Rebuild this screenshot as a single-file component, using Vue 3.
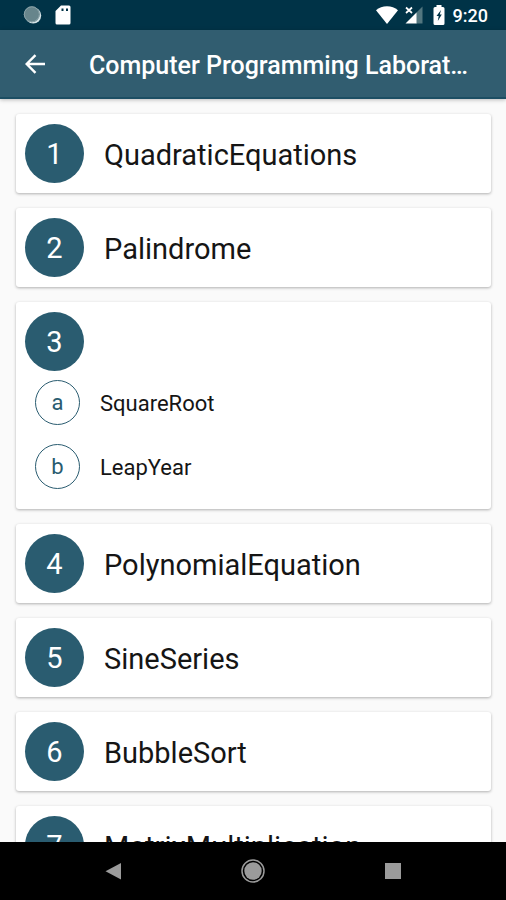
<script setup>
const programs = [
  { number: 1, name: 'QuadraticEquations' },
  { number: 2, name: 'Palindrome' },
  {
    number: 3,
    parts: [
      { letter: 'a', name: 'SquareRoot' },
      { letter: 'b', name: 'LeapYear' },
    ],
  },
  { number: 4, name: 'PolynomialEquation' },
  { number: 5, name: 'SineSeries' },
  { number: 6, name: 'BubbleSort' },
  { number: 7, name: 'MatrixMultiplication' },
]
</script>

<template>
  <div class="screen">
    <div class="status">
      <div class="status-group left">
        <svg width="20" height="20" viewBox="0 0 20 20" aria-hidden="true">
          <circle cx="10.2" cy="10.5" r="8" fill="#d5e3e6" />
          <circle cx="8.800" cy="9.300" r="8" fill="#67858c" />
          <circle cx="8.800" cy="9.300" r="7.500" fill="none" stroke="#8ba3a9" stroke-width="1" />
        </svg>
        <svg width="16" height="20" viewBox="0 0 16 20" aria-hidden="true">
          <path
            fill="#fff"
            fill-rule="evenodd"
            d="M6 .5h8a1.500 1.500 0 0 1 1.500 1.500v16a1.500 1.500 0 0 1-1.500 1.500H2A1.500 1.500 0 0 1 .5 18V6zM6.500 3.500v2.500h2v-2.500zm4.500 0v2.500h2v-2.500z"
          />
        </svg>
      </div>
      <div class="status-group right">
        <svg class="wifi" width="22" height="18" viewBox="0 0 22 18" aria-hidden="true">
          <path fill="#fff" d="M11 18 0 4.200C3 1.600 6.800.2 11 .2s8 1.400 11 4z" />
        </svg>
        <svg class="cell" width="18" height="18" viewBox="0 0 18 18" aria-hidden="true">
          <path fill="#52767f" d="M17.500.5v17H11V7z" />
          <path fill="#fff" d="M11.500 6.500v11H.5z" />
          <path d="M1 1.500l6 5.500M7 1.500 1 7" stroke="#fff" stroke-width="1.700" />
        </svg>
        <svg class="battery" width="12" height="20" viewBox="0 0 12 20" aria-hidden="true">
          <path fill="#fff" d="M3.500 0h5v2H10a1.500 1.500 0 0 1 1.500 1.500v15A1.500 1.500 0 0 1 10 20H2a1.500 1.500 0 0 1-1.500-1.500v-15A1.500 1.500 0 0 1 2 2h1.500z" />
          <path fill="#003347" d="M8 5 3.500 11h2.200L4.800 16 8.800 9.500H6.800z" />
        </svg>
        <span class="clock">9:20</span>
      </div>
    </div>

    <header class="bar">
      <button class="back" type="button" aria-label="Back">
        <svg width="20" height="20" viewBox="0 0 20 20" aria-hidden="true">
          <path d="M20 10H2M10.500 1.200 1.700 10l8.800 8.800" fill="none" stroke="#fff" stroke-width="2.400" />
        </svg>
      </button>
      <h1 class="title">Computer Programming Laborat…</h1>
    </header>

    <main class="list">
      <section v-for="program in programs" :key="program.number" class="card">
        <div class="row">
          <span class="number">{{ program.number }}</span>
          <span v-if="program.name" class="name">{{ program.name }}</span>
        </div>
        <div v-for="part in program.parts" :key="part.letter" class="part">
          <span class="letter">{{ part.letter }}</span>
          <span class="part-name">{{ part.name }}</span>
        </div>
      </section>
    </main>

    <nav class="system">
      <button type="button" aria-label="Back">
        <svg width="24" height="24" viewBox="0 0 24 24" aria-hidden="true">
          <path d="M20 4v16.500L4.500 12.200z" fill="#9b9b9b" />
        </svg>
      </button>
      <button type="button" aria-label="Home">
        <svg width="24" height="24" viewBox="0 0 24 24" aria-hidden="true">
          <circle cx="12" cy="12" r="11" fill="none" stroke="#9b9b9b" stroke-width="1.500" />
          <circle cx="12" cy="12" r="8.700" fill="#9b9b9b" />
        </svg>
      </button>
      <button type="button" aria-label="Recent apps">
        <svg width="24" height="24" viewBox="0 0 24 24" aria-hidden="true">
          <rect x="4" y="4" width="16" height="16" fill="#9b9b9b" />
        </svg>
      </button>
    </nav>
  </div>
</template>

<style>
body {
  margin: 0;
}
</style>

<style scoped>
.screen {
  display: flex;
  flex-direction: column;
  height: 100vh;
  overflow: hidden;
  background: #fafafa;
  color: #151515;
  font-family: Roboto, sans-serif;
}
button {
  display: flex;
  align-items: center;
  justify-content: center;
  padding: 0;
  border: 0;
  background: none;
}
svg {
  display: block;
}
.status {
  flex: none;
  display: flex;
  align-items: center;
  justify-content: space-between;
  height: 30px;
  padding: 0 18px 0 23px;
  background: #003347;
}
.status-group {
  display: flex;
  align-items: center;
}
.left {
  gap: 12px;
}
.wifi {
  margin-right: 7px;
}
.cell {
  margin-right: 10px;
}
.battery {
  margin-right: 8px;
}
.clock {
  padding-top: 2px;
  color: #fff;
  font-size: 18px;
  font-weight: 500;
  line-height: 28px;
}
.bar {
  flex: none;
  position: relative;
  display: flex;
  align-items: center;
  gap: 43px;
  height: 69px;
  padding: 0 24px;
  box-sizing: border-box;
  border-bottom: 2px solid #1c4e63;
  background: #315d70;
  box-shadow: 0 1px 4px rgba(0, 0, 0, 0.25);
}
.back {
  flex: none;
  width: 22px;
  height: 48px;
}
.title {
  margin: 0;
  padding-top: 4px;
  color: #fff;
  font-size: 25px;
  font-weight: 500;
  line-height: 32px;
  white-space: nowrap;
}
.list {
  flex: 1;
  min-height: 0;
  display: flex;
  flex-direction: column;
  gap: 15px;
  padding: 15px 15px 0 16px;
  overflow: hidden;
}
.card {
  flex: none;
  padding: 10px 10px 10px 9px;
  border-radius: 3px;
  background: #fff;
  box-shadow: 0 1px 3px rgba(0, 0, 0, 0.3);
}
.row {
  display: flex;
  align-items: center;
  gap: 20px;
}
.number,
.letter {
  flex: none;
  display: flex;
  align-items: center;
  justify-content: center;
  box-sizing: border-box;
  border-radius: 50%;
}
.number {
  width: 59px;
  height: 59px;
  background: #2a5c70;
  color: #fff;
  font-size: 29px;
}
.name {
  padding-top: 2px;
  font-size: 29px;
  line-height: 36px;
}
.part {
  display: flex;
  align-items: center;
  gap: 20px;
  padding: 9px 0 10px 10px;
}
.letter {
  width: 45px;
  height: 45px;
  border: 1px solid #2a5c70;
  color: #2a5c70;
  font-size: 22px;
}
.part-name {
  padding-top: 2px;
  font-size: 22px;
  line-height: 28px;
}
.system {
  flex: none;
  display: flex;
  align-items: center;
  justify-content: center;
  gap: 92px;
  height: 58px;
  background: #000;
}
.system button {
  width: 48px;
  height: 48px;
}
</style>
